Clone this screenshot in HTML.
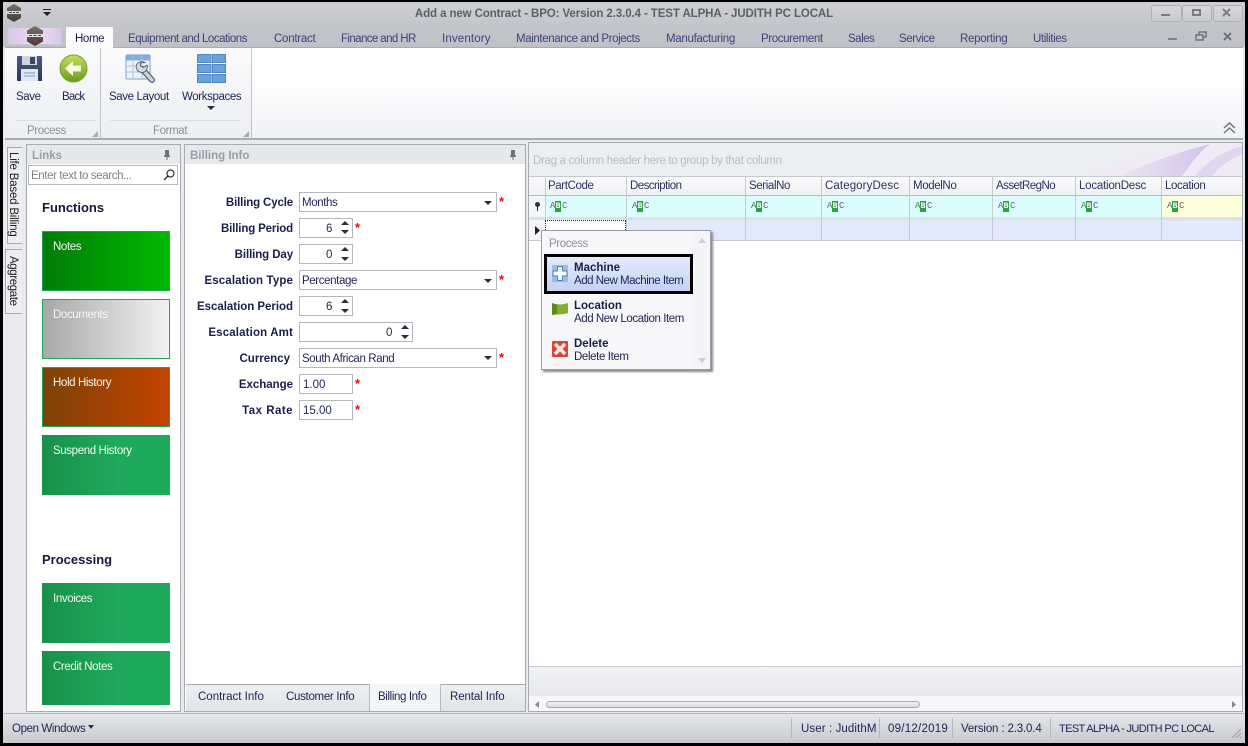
<!DOCTYPE html>
<html><head><meta charset="utf-8"><style>
html,body{margin:0;padding:0;background:#000}
#p{position:relative;width:1248px;height:746px;overflow:hidden;background:#e9eaee;font-family:"Liberation Sans",sans-serif;font-size:11.5px;letter-spacing:-.38px;color:#1f2352}
#p div,#p svg{position:absolute}
.t{white-space:nowrap;line-height:14px;height:14px;margin-top:1px}
.tab{color:#3d4478;top:31px}
.b{font-weight:bold;color:#1a1f4a;letter-spacing:0}
.lb{font-weight:bold;color:#1a1f4a;text-align:right;width:110px;left:183px;letter-spacing:-.15px;margin-top:0}
.in{background:#fff;border:1px solid #b4b7bd;box-sizing:border-box;height:20px}
.g{color:#8e919a}
.num{letter-spacing:0}
.star{color:#f00;font-weight:bold;font-size:13px;letter-spacing:0;margin-top:0}
.h{font-weight:bold;font-size:13px;color:#15183f;letter-spacing:0;margin-top:0}
.card{left:42px;width:128px;height:60px;box-sizing:border-box;color:#fff}
.card span{position:absolute;left:10px;top:8px;white-space:nowrap;line-height:14px;color:#f4f8f0}
.ch{top:178px;color:#2c3160}
.v{width:1px;background:#c6c9cf}
.abc{top:201px;width:20px;height:11px;font:9px/11px "Liberation Mono",monospace;letter-spacing:-.9px;color:#5f6570;white-space:nowrap}
.abc b{display:inline-block;vertical-align:top;width:6px;height:11px;background:#2ea043;color:#fff;text-align:center;font-weight:bold;margin:0 1px 0 .5px;letter-spacing:0;font-size:8px}
.ar{width:0;height:0;border-left:4px solid transparent;border-right:4px solid transparent}
.up{border-bottom:4px solid #2d2d33}
.dn{border-top:4px solid #2d2d33}
</style></head><body><div id="p">
<!-- title bar -->
<div style="left:0;top:0;width:1248px;height:47px;background:linear-gradient(#cfd0d5,#c2c4c9 60%,#bfc1c7)"></div>
<div class="t" style="left:0;width:1248px;top:6px;text-align:center;font-weight:bold;color:#5c6068;letter-spacing:-.1px">Add a new Contract - BPO: Version 2.3.0.4 - TEST ALPHA - JUDITH PC LOCAL</div>
<svg style="left:6px;top:4px" width="16" height="18" viewBox="0 0 16 18"><defs><linearGradient id="hx" x1="0" y1="0" x2="0" y2="1"><stop offset="0" stop-color="#77726e"/><stop offset="1" stop-color="#3f3b39"/></linearGradient></defs><path d="M8 0l7 4v10l-7 4-7-4V4z" fill="url(#hx)"/><rect x="1" y="7" width="14" height="3" fill="#d8d8d8"/><path d="M3 8.500h3M7 8.500h2M10 8.500h3" stroke="#444"/></svg>
<div class="ar dn" style="left:43px;top:12px;border-top-color:#222"></div><div style="left:43px;top:9px;width:8px;height:1px;background:#222"></div>
<!-- window buttons -->
<div style="left:1151px;top:5px;width:29px;height:15px;border:1px solid #aeb0b6;border-radius:3px;background:linear-gradient(#d8d9dc,#c8cace)"></div>
<div style="left:1161px;top:14px;width:9px;height:2px;background:#7a7c82"></div>
<div style="left:1182px;top:5px;width:28px;height:15px;border:1px solid #aeb0b6;border-radius:3px;background:linear-gradient(#d8d9dc,#c8cace)"></div>
<div style="left:1192px;top:9px;border:2px solid #7a7c82;width:5px;height:3px"></div>
<div style="left:1213px;top:5px;width:28px;height:15px;border:1px solid #aeb0b6;border-radius:3px;background:linear-gradient(#d8d9dc,#c8cace)"></div>
<svg style="left:1222px;top:8px" width="10" height="9"><path d="M1 1l7 7M8 1L1 8" stroke="#7a7c82" stroke-width="2"/></svg>
<!-- ribbon tabs -->
<div style="left:7px;top:27px;width:55px;height:18px;background:linear-gradient(90deg,#d9c7ec,#efd8f0 60%,#d8c8e8);border:1px solid #c8c3d4;box-sizing:border-box"></div>
<svg style="left:26px;top:26px" width="18" height="20" viewBox="0 0 18 20"><path d="M9 0l8 4.500v11L9 20l-8-4.500v-11z" fill="url(#hx)"/><rect x="1" y="8" width="16" height="3" fill="#e5e5e5"/><path d="M3 9.500h3M7.500 9.500h3M12 9.500h3" stroke="#444"/><circle cx="9" cy="15" r="2" fill="#8c3a3a"/></svg>
<div style="left:66px;top:27px;width:47px;height:21px;background:#fbfbfc"></div>
<div class="t" style="left:75px;top:31px;color:#1a1f4a">Home</div>
<div class="t tab" style="left:128px;letter-spacing:-.47px">Equipment and Locations</div>
<div class="t tab" style="left:274px;letter-spacing:-.25px">Contract</div>
<div class="t tab" style="left:341px;letter-spacing:-.6px">Finance and HR</div>
<div class="t tab" style="left:442px;letter-spacing:.15px">Inventory</div>
<div class="t tab" style="left:516px">Maintenance and Projects</div>
<div class="t tab" style="left:666px;letter-spacing:-.3px">Manufacturing</div>
<div class="t tab" style="left:761px">Procurement</div>
<div class="t tab" style="left:848px;letter-spacing:-.5px">Sales</div>
<div class="t tab" style="left:899px">Service</div>
<div class="t tab" style="left:960px;letter-spacing:-.28px">Reporting</div>
<div class="t tab" style="left:1033px">Utilities</div>
<div style="left:1168px;top:38px;width:9px;height:2px;background:#80848c"></div>
<svg style="left:1195px;top:31px" width="12" height="11"><rect x="4" y="1" width="7" height="5" fill="none" stroke="#70747c" stroke-width="1.500"/><rect x="1" y="4" width="7" height="5" fill="#c2c4c9" stroke="#70747c" stroke-width="1.500"/></svg>
<svg style="left:1223px;top:32px" width="10" height="9"><path d="M1 1l7 7M8 1L1 8" stroke="#70747c" stroke-width="2"/></svg>
<!-- ribbon body -->
<div style="left:5px;top:47px;width:1238px;height:91px;background:linear-gradient(#fff 30%,#f0f1f5);border-top:1px solid #a9abb2;border-bottom:1px solid #a9abb2"></div>
<div style="left:5px;top:47px;width:96px;height:92px;background:linear-gradient(#fbfbfc,#eceef2);border-right:1px solid #c0c2c8;box-sizing:border-box"></div>
<div style="left:101px;top:47px;width:151px;height:92px;background:linear-gradient(#fbfbfc,#eceef2);border-right:1px solid #c0c2c8;box-sizing:border-box"></div>
<div style="left:5px;top:47px;width:1238px;height:1px;background:#a9abb2"></div>
<div style="left:66px;top:47px;width:47px;height:1px;background:#fbfbfc"></div>
<div style="left:16px;top:120px;width:80px;height:1px;background:#dcdee3"></div>
<div style="left:110px;top:120px;width:130px;height:1px;background:#dcdee3"></div>
<div style="left:5px;top:138px;width:1238px;height:1px;background:#a9abb2"></div>
<!-- save icon -->
<svg style="left:16px;top:55px" width="27" height="27" viewBox="0 0 27 27"><defs><linearGradient id="sv" x1="0" y1="0" x2="0" y2="1"><stop offset="0" stop-color="#4b5a86"/><stop offset="1" stop-color="#2c3858"/></linearGradient></defs><path d="M1 2a1 1 0 011-1h23a1 1 0 011 1v24H2a1 1 0 01-1-1z" fill="url(#sv)"/><rect x="6" y="1" width="15" height="9" fill="#d2d6de"/><rect x="14" y="2" width="5" height="7" fill="#3b4668"/><rect x="5" y="14" width="17" height="12" fill="#dbe8f6"/><path d="M8 18h11M8 21h11" stroke="#7e9cc0"/></svg>
<!-- back icon -->
<svg style="left:59px;top:54px" width="30" height="30" viewBox="0 0 30 30"><defs><linearGradient id="gb" x1="0" y1="0" x2="0" y2="1"><stop offset="0" stop-color="#c4dc60"/><stop offset="1" stop-color="#6b9c1c"/></linearGradient></defs><circle cx="14.500" cy="14.500" r="13.500" fill="url(#gb)" stroke="#76a02a"/><path d="M6 14.500L14 7v4.500h8v6h-8V22z" fill="#f6f8e4"/></svg>
<!-- save layout icon -->
<svg style="left:125px;top:53px" width="30" height="31" viewBox="0 0 30 31"><rect x="1" y="2" width="24" height="24" rx="1" fill="#eef3fa" stroke="#7fa3cc"/><rect x="1.500" y="2.500" width="23" height="5" fill="#7eaee0"/><path d="M1 13h24M1 19h24M8 2v24M17 2v24" stroke="#a9c4e2"/><path d="M17 16l10 11" stroke="#5f6876" stroke-width="6" stroke-linecap="round"/><path d="M17 16l10 11" stroke="#cfd3da" stroke-width="3.500" stroke-linecap="round"/><path d="M20 9.500a6 6 0 00-8 1.500 6 6 0 00.500 6.500 6 6 0 007 1.500 6 6 0 002.500-7l-3.500 2.500-3-1.500v-3z" fill="#d5d9df" stroke="#5f6876"/></svg>
<!-- workspaces icon -->
<svg style="left:197px;top:54px" width="29" height="29" viewBox="0 0 29 29"><g fill="#6ba2d8" stroke="#4d86c0"><rect x=".5" y=".5" width="13.500" height="8"/><rect x="15.500" y=".5" width="13" height="8"/><rect x=".5" y="10.500" width="13.500" height="8"/><rect x="15.500" y="10.500" width="13" height="8"/><rect x=".5" y="20.500" width="13.500" height="8"/><rect x="15.500" y="20.500" width="13" height="8"/></g></svg>
<div class="t" style="left:16px;top:89px">Save</div>
<div class="t" style="left:62px;top:89px;letter-spacing:-.8px">Back</div>
<div class="t" style="left:109px;top:89px">Save Layout</div>
<div class="t" style="left:182px;top:89px">Workspaces</div>
<div class="ar dn" style="left:207px;top:106px"></div>
<div class="t g" style="left:27px;top:123px">Process</div>
<div class="t g" style="left:153px;top:123px">Format</div>
<svg style="left:92px;top:131px" width="6" height="6"><path d="M0 6L6 0v6z" fill="#a8abb2"/></svg>
<svg style="left:243px;top:131px" width="6" height="6"><path d="M0 6L6 0v6z" fill="#a8abb2"/></svg>
<svg style="left:1223px;top:122px" width="13" height="12"><path d="M1 6l5.500-5L12 6M1 11l5.500-5L12 11" fill="none" stroke="#70747c" stroke-width="1.500"/></svg>
<!-- side tabs -->
<div style="left:7px;top:147px;width:15px;height:97px;background:#eceef1;border:1px solid #a9abb2;border-right:none;box-sizing:border-box"></div>
<div style="left:5px;top:249px;width:17px;height:65px;background:#eceef1;border:1px solid #a9abb2;border-right:none;box-sizing:border-box"></div>
<div class="t" style="left:7px;top:151px;transform-origin:0 0;transform:translate(13px,0) rotate(90deg);color:#222;letter-spacing:-.2px">Life Based Billing</div>
<div class="t" style="left:7px;top:255px;transform-origin:0 0;transform:translate(13px,0) rotate(90deg);color:#222">Aggregate</div>
<!-- links panel -->
<div style="left:26px;top:144px;width:155px;height:568px;background:#fff;border:1px solid #a9abb2;box-sizing:border-box"></div>
<div style="left:27px;top:145px;width:153px;height:19px;background:#e7e8ec"></div>
<div class="t b" style="left:32px;top:148px;color:#9a9da5">Links</div>
<svg style="left:163px;top:150px" width="8" height="10"><path d="M2 0h4v5l1 1v1H4.500v3h-1V7H1V6l1-1z" fill="#6f7279"/></svg>
<div style="left:28px;top:165px;width:150px;height:20px;background:#fff;border:1px solid #b4b7bd;box-sizing:border-box"></div>
<div class="t" style="left:31px;top:168px;color:#7d8087">Enter text to search...</div>
<svg style="left:163px;top:169px" width="12" height="12"><circle cx="7.500" cy="4.500" r="3.500" fill="none" stroke="#333" stroke-width="1.200"/><path d="M5 7l-4 4" stroke="#333" stroke-width="1.400"/></svg>
<div class="t h" style="left:42px;top:201px">Functions</div>
<div class="card" style="top:231px;background:linear-gradient(90deg,#007c07,#00b900);border:1px solid #1fa35a"><span>Notes</span></div>
<div class="card" style="top:299px;background:linear-gradient(90deg,#a8a8a8,#f2f2f2);border:1px solid #22a45a"><span>Documents</span></div>
<div class="card" style="top:367px;background:linear-gradient(90deg,#7d4207,#c44300);border:1px solid #22a45a"><span>Hold History</span></div>
<div class="card" style="top:435px;background:linear-gradient(90deg,#17914a,#1fa95d 60%)"><span style="left:11px;top:9px">Suspend History</span></div>
<div class="t h" style="left:42px;top:553px">Processing</div>
<div class="card" style="top:583px;background:linear-gradient(90deg,#17914a,#1fa95d 60%)"><span style="left:11px;top:9px">Invoices</span></div>
<div class="card" style="top:651px;background:linear-gradient(90deg,#17914a,#1fa95d 60%);height:54px"><span style="left:11px;top:9px">Credit Notes</span></div>
<!-- billing panel -->
<div style="left:184px;top:144px;width:342px;height:568px;background:#fff;border:1px solid #a9abb2;box-sizing:border-box"></div>
<div style="left:185px;top:145px;width:340px;height:19px;background:#e7e8ec"></div>
<div class="t b" style="left:190px;top:148px;color:#9a9da5">Billing Info</div>
<svg style="left:509px;top:150px" width="8" height="10"><path d="M2 0h4v5l1 1v1H4.500v3h-1V7H1V6l1-1z" fill="#6f7279"/></svg>
<div class="t lb" style="top:196px">Billing Cycle</div>
<div class="t lb" style="top:222px">Billing Period</div>
<div class="t lb" style="top:248px;letter-spacing:-.1px">Billing Day</div>
<div class="t lb" style="top:274px;letter-spacing:.12px">Escalation Type</div>
<div class="t lb" style="top:300px;letter-spacing:-.03px">Escalation Period</div>
<div class="t lb" style="top:326px;letter-spacing:.14px">Escalation Amt</div>
<div class="t lb" style="top:352px;left:180px;letter-spacing:0">Currency</div>
<div class="t lb" style="top:378px;letter-spacing:-.03px">Exchange</div>
<div class="t lb" style="top:404px;letter-spacing:.47px">Tax Rate</div>
<div class="in" style="left:299px;top:192px;width:198px"></div><div class="t" style="left:302px;top:195px">Months</div>
<div class="ar dn" style="left:484px;top:201px"></div><div class="t star" style="left:499px;top:195px">*</div>
<div class="in" style="left:299px;top:218px;width:54px"></div><div class="t num" style="left:326px;top:221px">6</div>
<div class="ar up" style="left:341px;top:221px"></div><div class="ar dn" style="left:341px;top:230px"></div><div class="t star" style="left:355px;top:221px">*</div>
<div class="in" style="left:299px;top:244px;width:54px"></div><div class="t num" style="left:326px;top:247px">0</div>
<div class="ar up" style="left:341px;top:247px"></div><div class="ar dn" style="left:341px;top:257px"></div>
<div class="in" style="left:299px;top:270px;width:198px"></div><div class="t" style="left:302px;top:273px">Percentage</div>
<div class="ar dn" style="left:484px;top:279px"></div><div class="t star" style="left:499px;top:273px">*</div>
<div class="in" style="left:299px;top:296px;width:54px"></div><div class="t num" style="left:326px;top:299px">6</div>
<div class="ar up" style="left:341px;top:299px"></div><div class="ar dn" style="left:341px;top:309px"></div>
<div class="in" style="left:299px;top:322px;width:114px"></div><div class="t num" style="left:386px;top:325px">0</div>
<div class="ar up" style="left:401px;top:325px"></div><div class="ar dn" style="left:401px;top:335px"></div>
<div class="in" style="left:299px;top:348px;width:198px"></div><div class="t" style="left:302px;top:351px">South African Rand</div>
<div class="ar dn" style="left:484px;top:356px"></div><div class="t star" style="left:499px;top:351px">*</div>
<div class="in" style="left:299px;top:374px;width:54px"></div><div class="t num" style="left:303px;top:377px">1.00</div><div class="t star" style="left:355px;top:377px">*</div>
<div class="in" style="left:299px;top:400px;width:54px"></div><div class="t num" style="left:303px;top:403px">15.00</div><div class="t star" style="left:355px;top:403px">*</div>
<!-- bottom tabs -->
<div style="left:186px;top:684px;width:339px;height:27px;background:linear-gradient(#eef0f3,#e1e3e8)"></div>
<div style="left:186px;top:684px;width:183px;height:1px;background:#a9abb2"></div>
<div style="left:369px;top:684px;width:72px;height:27px;background:#f4f5f7;border-left:1px solid #b8bac0;border-right:1px solid #b8bac0;box-sizing:border-box"></div>
<div style="left:441px;top:684px;width:84px;height:1px;background:#a9abb2"></div>
<div class="t" style="left:198px;top:689px;letter-spacing:0">Contract Info</div>
<div class="t" style="left:286px;top:689px;letter-spacing:-.3px">Customer Info</div>
<div class="t" style="left:378px;top:689px">Billing Info</div>
<div class="t" style="left:450px;top:689px;letter-spacing:-.1px">Rental Info</div>
<!-- grid -->
<div style="left:528px;top:142px;width:715px;height:570px;background:#fff;border:1px solid #a9abb2;box-sizing:border-box"></div>
<div style="left:529px;top:143px;width:713px;height:33px;background:#eceef1"></div>
<svg style="left:1060px;top:143px" width="182" height="33" viewBox="0 0 182 33"><defs><linearGradient id="sw" x1="0" y1="0" x2="1" y2="0"><stop offset="0" stop-color="#ebe5f2"/><stop offset="1" stop-color="#d2c5ea"/></linearGradient></defs><path d="M25 33C50 20 90 8 182 0v33z" fill="#f0eaf5"/><path d="M60 33C85 22 120 8 150 1c-15 12-20 22-28 32z" fill="url(#sw)"/><path d="M135 33c10-12 25-24 47-30v8c-14 6-24 14-30 22z" fill="#e0d6f0"/></svg>
<div class="t" style="left:533px;top:153px;color:#b9bcc2;letter-spacing:-.3px">Drag a column header here to group by that column</div>
<div style="left:529px;top:176px;width:713px;height:19px;background:linear-gradient(#fafafb,#f0f1f3);border-top:1px solid #c6c9cf;box-sizing:border-box"></div>
<div style="left:529px;top:195px;width:713px;height:1px;background:#b9bcc2"></div>
<div style="left:545px;top:196px;width:616px;height:21px;background:#dcfdfd"></div>
<div style="left:1162px;top:196px;width:80px;height:21px;background:#fefedd"></div>
<div style="left:529px;top:196px;width:16px;height:21px;background:#f4f5f6"></div>
<div style="left:529px;top:217px;width:713px;height:3px;background:#dfe1e5"></div>
<div style="left:545px;top:220px;width:697px;height:20px;background:#e2e9fb"></div>
<div style="left:529px;top:220px;width:16px;height:20px;background:#f4f5f6"></div>
<div style="left:529px;top:240px;width:713px;height:1px;background:#c6c9cf"></div>
<div class="v" style="left:545px;top:176px;height:65px"></div>
<div class="v" style="left:626px;top:176px;height:65px"></div>
<div class="v" style="left:745px;top:176px;height:65px"></div>
<div class="v" style="left:821px;top:176px;height:65px"></div>
<div class="v" style="left:909px;top:176px;height:65px"></div>
<div class="v" style="left:992px;top:176px;height:65px"></div>
<div class="v" style="left:1075px;top:176px;height:65px"></div>
<div class="v" style="left:1161px;top:176px;height:65px"></div>
<div class="t ch" style="left:548px">PartCode</div>
<div class="t ch" style="left:630px;letter-spacing:-.55px">Description</div>
<div class="t ch" style="left:749px">SerialNo</div>
<div class="t ch" style="left:825px;letter-spacing:.1px">CategoryDesc</div>
<div class="t ch" style="left:913px">ModelNo</div>
<div class="t ch" style="left:996px;letter-spacing:-.55px">AssetRegNo</div>
<div class="t ch" style="left:1079px;letter-spacing:-.22px">LocationDesc</div>
<div class="t ch" style="left:1165px">Location</div>
<div class="abc" style="left:550px">A<b>B</b>C</div>
<div class="abc" style="left:632px">A<b>B</b>C</div>
<div class="abc" style="left:751px">A<b>B</b>C</div>
<div class="abc" style="left:827px">A<b>B</b>C</div>
<div class="abc" style="left:915px">A<b>B</b>C</div>
<div class="abc" style="left:998px">A<b>B</b>C</div>
<div class="abc" style="left:1081px">A<b>B</b>C</div>
<div class="abc" style="left:1167px">A<b>B</b>C</div>
<svg style="left:534px;top:202px" width="7" height="9"><circle cx="3.500" cy="2.500" r="2.500" fill="#333"/><path d="M3 4h1v5H3z" fill="#333"/></svg>
<svg style="left:535px;top:226px" width="5" height="9"><path d="M0 0l5 4.500L0 9z" fill="#222"/></svg>
<div style="left:545px;top:220px;width:81px;height:20px;background:#fff;border:1px dotted #222;box-sizing:border-box"></div>
<!-- grid bottom -->
<div style="left:529px;top:666px;width:713px;height:30px;background:linear-gradient(#f1f2f4,#e7e8eb);border-top:1px solid #c6c9cf;box-sizing:border-box"></div>
<div style="left:529px;top:696px;width:713px;height:15px;background:#f7f7f9"></div>
<div style="left:546px;top:701px;width:374px;height:7px;background:linear-gradient(#f5f5f7,#d9dbdf);border:1px solid #a9abb2;border-radius:4px;box-sizing:border-box"></div>
<svg style="left:535px;top:701px" width="4" height="7"><path d="M4 0L0 3.500 4 7z" fill="#888"/></svg>
<svg style="left:1232px;top:701px" width="4" height="7"><path d="M0 0l4 3.500L0 7z" fill="#888"/></svg>
<!-- popup -->
<div style="left:541px;top:230px;width:170px;height:140px;background:#f7f7f9;border:1px solid #9a9da5;box-sizing:border-box;box-shadow:2px 2px 2px #8a8a8a"></div>
<div style="left:692px;top:231px;width:18px;height:138px;background:#f4f5f7"></div>
<svg style="left:698px;top:238px" width="8" height="5"><path d="M0 5l4-5 4 5z" fill="#ccced3"/></svg>
<svg style="left:698px;top:358px" width="8" height="5"><path d="M0 0l4 5 4-5z" fill="#ccced3"/></svg>
<div class="t g" style="left:549px;top:236px">Process</div>
<div style="left:544px;top:254px;width:149px;height:40px;background:linear-gradient(#e6ebfb,#c4d1f2);border:3px solid #000;box-sizing:border-box"></div>
<svg style="left:552px;top:265px" width="16" height="17" viewBox="0 0 16 17"><rect width="16" height="17" fill="#7fb0da" opacity=".7"/><path d="M5.500 1.500h5v4.500h4.500v5h-4.500v4.500h-5V11H1V6h4.500z" fill="#f4f8fc" stroke="#4c86be"/></svg>
<svg style="left:552px;top:302px" width="16" height="14" viewBox="0 0 16 14"><path d="M0 1c5 2 10 2 16 0v10c-6 2-11 1-16 2z" fill="#83ad2c"/><path d="M0 1c2 1 3 1 5 1.500V12L0 13z" fill="#5c8a1a"/></svg>
<svg style="left:552px;top:341px" width="16" height="16" viewBox="0 0 16 16"><rect width="16" height="16" rx="1" fill="#d8463c"/><path d="M3 3l10 10M13 3L3 13" stroke="#f6e6e2" stroke-width="3.500"/></svg>
<div class="t b" style="left:574px;top:260px">Machine</div>
<div class="t" style="left:574px;top:273px;letter-spacing:-.48px">Add New Machine Item</div>
<div class="t b" style="left:574px;top:298px">Location</div>
<div class="t" style="left:574px;top:311px;letter-spacing:-.43px">Add New Location Item</div>
<div class="t b" style="left:574px;top:336px">Delete</div>
<div class="t" style="left:574px;top:349px">Delete Item</div>
<!-- status bar -->
<div style="left:0;top:713px;width:1248px;height:30px;background:linear-gradient(#e5e6e9,#c9cace);border-top:1px solid #b5b7bd;box-sizing:border-box"></div>
<div class="t" style="left:12px;top:721px">Open Windows</div>
<div class="ar dn" style="left:88px;top:725px;border-left-width:3.500px;border-right-width:3.500px"></div>
<div class="v" style="left:791px;top:718px;height:20px;background:#b5b7bd"></div>
<div class="v" style="left:879px;top:718px;height:20px;background:#b5b7bd"></div>
<div class="v" style="left:952px;top:718px;height:20px;background:#b5b7bd"></div>
<div class="v" style="left:1050px;top:718px;height:20px;background:#b5b7bd"></div>
<div class="t" style="left:801px;top:721px;letter-spacing:.1px">User : JudithM</div>
<div class="t" style="left:888px;top:721px;letter-spacing:.25px">09/12/2019</div>
<div class="t" style="left:961px;top:721px;letter-spacing:-.15px">Version : 2.3.0.4</div>
<div class="t" style="left:1059px;top:721px;font-size:11px;letter-spacing:-.62px">TEST ALPHA - JUDITH PC LOCAL</div>
<svg style="left:1231px;top:728px" width="11" height="11"><path d="M1 10l9-9M5 10l5-5M9 10l1-1" stroke="#9a9ca2"/></svg>
<!-- black frame -->
<div style="left:0;top:0;width:1248px;height:746px;border:solid #000;border-width:2px 3px 3px 3px;box-sizing:border-box"></div>
</div></body></html>
